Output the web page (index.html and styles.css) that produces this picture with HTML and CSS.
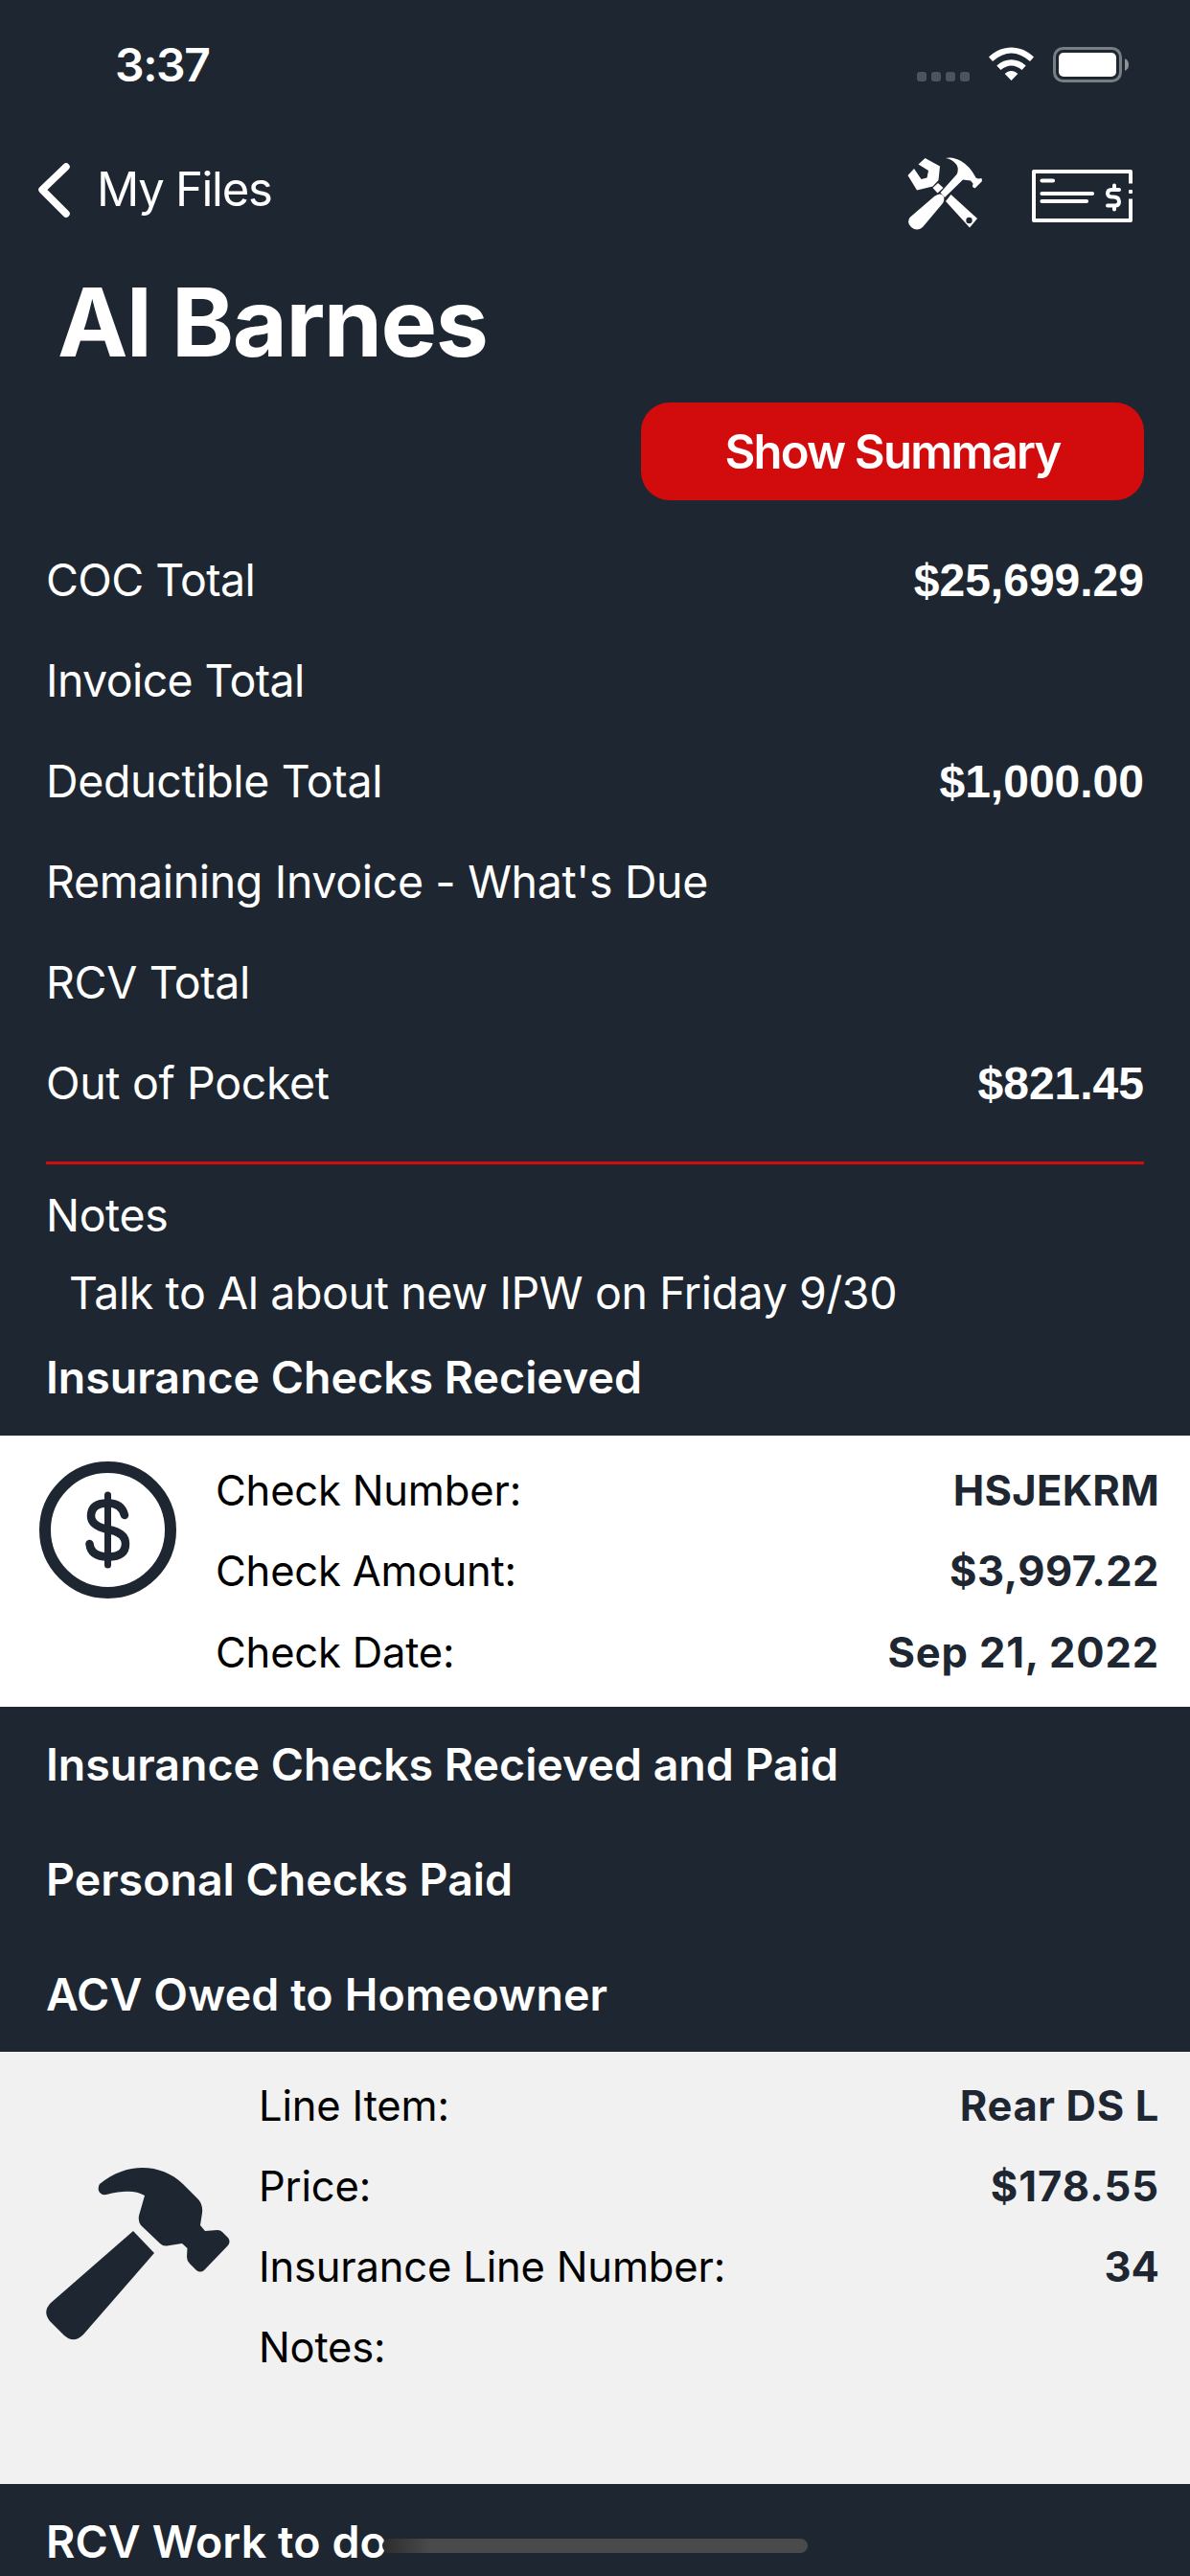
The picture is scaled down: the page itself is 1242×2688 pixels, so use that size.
FILE: index.html
```html
<!DOCTYPE html>
<html lang="en">
<head>
<meta charset="utf-8">
<title>Al Barnes</title>
<link rel="stylesheet" href="styles.css">
</head>
<body>
<div class="screen">
  <header class="status">
    <span class="time">3:37</span>
    <svg class="status-icons" width="224" height="40" viewBox="0 0 224 40">
      <g fill="#4b555d"><rect x="0" y="27" width="10" height="10" rx="3"/><rect x="15" y="27" width="10" height="10" rx="3"/><rect x="30" y="27" width="10" height="10" rx="3"/><rect x="45" y="27" width="10" height="10" rx="3"/></g>
      <g fill="#fff">
        <path d="M75 11.500C88 -2 109 -2 122 11.500L118 16Q98.500 -1 79 16Z"/>
        <path d="M83.300 20.500C92 12 105 12 113.700 20.500L109.500 25Q98.500 16 87.500 25Z"/>
        <path d="M91.700 29C96 25 101 25 105.300 29L98.500 36Z"/>
        <rect x="148" y="7" width="60" height="25" rx="5"/>
      </g>
      <rect x="143.500" y="2.500" width="69" height="34" rx="9" fill="none" stroke="#787e84" stroke-width="3"/>
      <path d="M217 13Q221 15 221 19.500Q221 24 217 26Z" fill="#8f9396"/>
    </svg>
  </header>

  <nav class="nav">
    <svg class="chevron" width="36" height="60" viewBox="0 0 36 60"><path d="M31 6L6 30L31 55" fill="none" stroke="#fff" stroke-width="7.500" stroke-linecap="round" stroke-linejoin="round"/></svg>
    <span class="back">My Files</span>
    <svg class="tools" width="80" height="78" viewBox="0 0 80 78">
      <g fill="#fff">
        <path d="M18.500 1L34 9.500L32.500 24L26.500 30.500L10 34.500L0.500 19L7 12L14.500 23L20.500 21.500L22 14L11.500 7.500Z"/>
        <path d="M32 27L37.500 32L31.500 37.500L26.500 32Z"/>
        <path d="M40 1Q47 -1 56 4Q66 10 71.500 21.500L74 22.500L77.500 22L78 25L70.500 32.500L68 31L68.500 27.500L66 24.500L58 23.500L39 42L34.500 37L51.500 18Q54 13 51.500 8Q47 2 40 1Z"/>
        <path d="M45.500 39L73 64L65 73.500L40 46Z"/>
        <path d="M28 41Q35 36 38 41Q39 45 37 48L16 73Q10 78 4 73Q-1 69 2.500 63Z"/>
      </g>
      <circle cx="64.500" cy="66" r="3.200" fill="#1e2731"/>
    </svg>
    <svg class="check" width="106" height="57" viewBox="0 0 106 57">
      <path d="M104 15.500V3H3V54H104V31.500" fill="none" stroke="#fff" stroke-width="4" stroke-linejoin="round"/>
      <rect x="102" y="22" width="4" height="4" rx="1" fill="#fff"/>
      <path d="M11.500 12.500H23M11.500 26H64M11.500 34H58" fill="none" stroke="#fff" stroke-width="4.200" stroke-linecap="round"/>
      <path d="M92 22H84Q80 22 80 26Q80 29.500 86 29.500Q92 29.500 92 34.500Q92 38.500 88 38.500H80M87 17.500V22M87 38.500V42.500" fill="none" stroke="#fff" stroke-width="4" stroke-linecap="round"/>
    </svg>
  </nav>

  <h1 class="title">Al Barnes</h1>
  <div class="actions"><button class="summary">Show Summary</button></div>

  <dl class="totals">
    <div class="total"><dt class="tight">COC Total</dt><dd>$25,699.29</dd></div>
    <div class="total"><dt class="tight">Invoice Total</dt></div>
    <div class="total"><dt>Deductible Total</dt><dd>$1,000.00</dd></div>
    <div class="total"><dt>Remaining Invoice - What's Due</dt></div>
    <div class="total"><dt>RCV Total</dt></div>
    <div class="total"><dt>Out of Pocket</dt><dd>$821.45</dd></div>
  </dl>

  <section class="notes">
    <p class="notes-label">Notes</p>
    <p class="notes-text">Talk to Al about new IPW on Friday 9/30</p>
  </section>

  <h2 class="section first">Insurance Checks Recieved</h2>
  <article class="card card-check">
    <svg class="coin" width="143" height="143" viewBox="0 0 143 143" fill="none" stroke="#1e2731" stroke-linecap="round">
      <circle cx="71.500" cy="71.500" r="65.500" stroke-width="12"/>
      <path d="M71.500 35V108" stroke-width="7"/>
      <path d="M89 56Q86 43.500 71.500 43.500Q54 43.500 54 57Q54 67 71.500 71Q90 74 90 86Q90 99.500 71.500 99.500Q54 99.500 52.500 86" stroke-width="8.500"/>
    </svg>
    <dl class="fields">
      <div class="field"><dt>Check Number:</dt><dd class="code">HSJEKRM</dd></div>
      <div class="field"><dt>Check Amount:</dt><dd class="amount">$3,997.22</dd></div>
      <div class="field"><dt>Check Date:</dt><dd class="date">Sep 21, 2022</dd></div>
    </dl>
  </article>

  <h2 class="section">Insurance Checks Recieved and Paid</h2>
  <h2 class="section">Personal Checks Paid</h2>
  <h2 class="section wide">ACV Owed to Homeowner</h2>
  <article class="card card-item">
    <svg class="hammer" width="192" height="181" viewBox="0 0 192 181" fill="#1e2731">
      <path d="M56 17C84 -6 120 -5 143 17L159 33Q164 39 163 47L161 60L166 66L179 65Q182 65 184 67L190 73Q193 77 190 81L165 107Q161 110 157 107L150 100Q147 97 147 93L147.500 84L142 79L126 81.500Q122 82 119 79L99 60Q96 56 97 50L103 29Q90 21 63 28Q57 29 55 24Q54 20 56 17Z"/>
      <path d="M91 66L113 89L39 174Q29 184 19 175L4 160Q-4 150 5 141Z"/>
    </svg>
    <dl class="fields">
      <div class="field"><dt>Line Item:</dt><dd class="item">Rear DS L</dd></div>
      <div class="field"><dt>Price:</dt><dd class="price">$178.55</dd></div>
      <div class="field"><dt>Insurance Line Number:</dt><dd>34</dd></div>
      <div class="field"><dt>Notes:</dt></div>
    </dl>
  </article>
  <h2 class="section wide">RCV Work to do</h2>
  <div class="home-indicator"></div>
</div>
</body>
</html>
```
FILE: styles.css
```css
* { box-sizing: border-box; margin: 0; padding: 0; }
body { background: #1e2731; color: #fff; font-family: Inter, "Liberation Sans", sans-serif; }
.screen { position: relative; width: 1242px; height: 2688px; overflow: hidden; display: flex; flex-direction: column; background: #1e2731; }
.screen > * { flex-shrink: 0; }

.status { height: 132px; display: flex; justify-content: space-between; padding: 38px 61px 0 120px; }
.time { font-size: 48px; font-weight: 600; line-height: 60px; letter-spacing: -1.400px; }
.status-icons { margin-top: 10px; }

.nav { height: 144px; display: flex; padding: 0 60px 0 38px; }
.chevron { margin-top: 36px; }
.back { flex: 1; margin: 36px 0 0 27px; font-size: 49px; line-height: 60px; letter-spacing: -1.300px; }
.tools { margin: 32px 49px 0 0; }
.check { margin-top: 44px; }

.title { height: 144px; padding-left: 60px; font-size: 98.500px; font-weight: 700; line-height: 121px; letter-spacing: -1.500px; }
.actions { height: 132px; display: flex; justify-content: flex-end; padding-right: 48px; }
.summary { width: 525px; height: 102px; border: 0; border-radius: 30px; background: #d20b0c; color: #fff; font: 600 49px Inter, sans-serif; letter-spacing: -1.800px; }

.totals { margin: 0 48px; padding-top: 1px; height: 663px; border-bottom: 3px solid #d20b0c; }
.total { height: 105px; display: flex; justify-content: space-between; line-height: 105px; font-size: 46.500px; letter-spacing: -0.350px; }
.total .tight { letter-spacing: -0.600px; }
.total dd { font-family: "Liberation Sans", sans-serif; font-weight: 700; font-size: 48px; letter-spacing: 0; }

.notes { height: 180px; padding-top: 23px; font-size: 46.500px; line-height: 60px; letter-spacing: -0.400px; }
.notes-label { padding-left: 48px; }
.notes-text { padding: 21px 0 0 72px; }

.section { height: 120px; padding-left: 48px; font-size: 46.500px; font-weight: 600; line-height: 120px; }
.section.first { height: 103px; line-height: 84px; }
.section.wide { letter-spacing: 0.130px; }

.card { display: flex; color: #000; font-size: 43.500px; }
.card-check { height: 283px; background: #fff; padding: 27px 32px 0 41px; }
.card-item { height: 451px; background: #f1f1f1; padding: 0 32px 0 48px; }
.hammer { margin-top: 121px; }
.fields { flex: 1; }
.card-check .fields { margin: -12px 0 0 41px; }
.card-item .fields { margin: 14px 0 0 30px; }
.field { height: 84.300px; line-height: 84.300px; display: flex; justify-content: space-between; letter-spacing: -0.180px; }
.card-item .field { height: 84px; line-height: 84px; }
.field dd { font-weight: 700; color: #1e2731; letter-spacing: 0; }
.field .code { letter-spacing: 0.300px; }
.field .amount { letter-spacing: 0.500px; }
.field .date { letter-spacing: 0.850px; }
.field .item { letter-spacing: 0.650px; }
.field .price { letter-spacing: 1px; }

/* floats over the scrolled content at the bottom of the screen */
.home-indicator { position: absolute; left: 399px; top: 2649px; width: 444px; height: 15px; border-radius: 8px; background: linear-gradient(90deg, #2c2c2c, #4a4a4a 50px); }
```
